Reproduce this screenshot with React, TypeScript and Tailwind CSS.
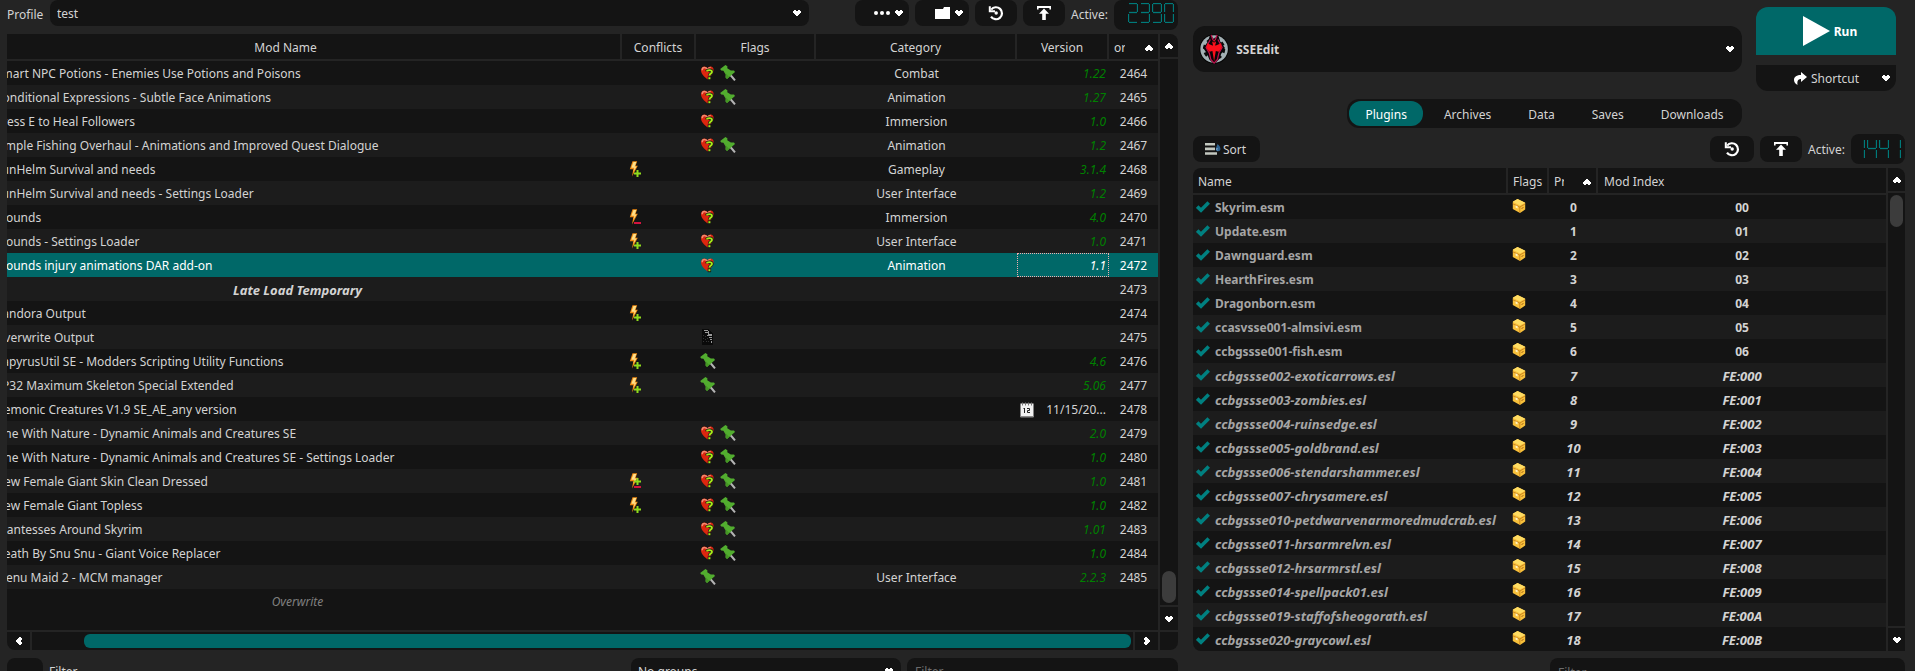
import { useState, type ReactNode } from 'react';
import { clsx } from 'clsx';

type Conflict = 'plus' | 'minus' | 'mixed';
type Flag = 'heart' | 'pin' | 'file';

interface Mod {
  name: string;
  priority: number;
  conflict?: Conflict;
  flags?: Flag[];
  category?: string;
  version?: string;
  separator?: boolean;
  dated?: boolean;
}

const MODS: Mod[] = [
  { name: 'Smart NPC Potions - Enemies Use Potions and Poisons', priority: 2464, flags: ['heart', 'pin'], category: 'Combat', version: '1.22' },
  { name: 'Conditional Expressions - Subtle Face Animations', priority: 2465, flags: ['heart', 'pin'], category: 'Animation', version: '1.27' },
  { name: 'Press E to Heal Followers', priority: 2466, flags: ['heart'], category: 'Immersion', version: '1.0' },
  { name: 'Simple Fishing Overhaul - Animations and Improved Quest Dialogue', priority: 2467, flags: ['heart', 'pin'], category: 'Animation', version: '1.2' },
  { name: 'SunHelm Survival and needs', priority: 2468, conflict: 'plus', category: 'Gameplay', version: '3.1.4' },
  { name: 'SunHelm Survival and needs - Settings Loader', priority: 2469, category: 'User Interface', version: '1.2' },
  { name: 'Wounds', priority: 2470, conflict: 'minus', flags: ['heart'], category: 'Immersion', version: '4.0' },
  { name: 'Wounds - Settings Loader', priority: 2471, conflict: 'plus', flags: ['heart'], category: 'User Interface', version: '1.0' },
  { name: 'Wounds injury animations DAR add-on', priority: 2472, flags: ['heart'], category: 'Animation', version: '1.1' },
  { name: 'Late Load Temporary', priority: 2473, separator: true },
  { name: 'Pandora Output', priority: 2474, conflict: 'plus' },
  { name: 'Overwrite Output', priority: 2475, flags: ['file'] },
  { name: 'PapyrusUtil SE - Modders Scripting Utility Functions', priority: 2476, conflict: 'plus', flags: ['pin'], version: '4.6' },
  { name: 'XP32 Maximum Skeleton Special Extended', priority: 2477, conflict: 'plus', flags: ['pin'], version: '5.06' },
  { name: 'Demonic Creatures V1.9 SE_AE_any version', priority: 2478, version: '11/15/20...', dated: true },
  { name: 'One With Nature - Dynamic Animals and Creatures SE', priority: 2479, flags: ['heart', 'pin'], version: '2.0' },
  { name: 'One With Nature - Dynamic Animals and Creatures SE - Settings Loader', priority: 2480, flags: ['heart', 'pin'], version: '1.0' },
  { name: 'New Female Giant Skin Clean Dressed', priority: 2481, conflict: 'mixed', flags: ['heart', 'pin'], version: '1.0' },
  { name: 'New Female Giant Topless', priority: 2482, conflict: 'plus', flags: ['heart', 'pin'], version: '1.0' },
  { name: 'Giantesses Around Skyrim', priority: 2483, flags: ['heart', 'pin'], version: '1.01' },
  { name: 'Death By Snu Snu - Giant Voice Replacer', priority: 2484, flags: ['heart', 'pin'], version: '1.0' },
  { name: 'Menu Maid 2 - MCM manager', priority: 2485, flags: ['pin'], category: 'User Interface', version: '2.2.3' },
];

const PLUGINS: { name: string; index: string; box: boolean }[] = [
  { name: 'Skyrim.esm', index: '00', box: true },
  { name: 'Update.esm', index: '01', box: false },
  { name: 'Dawnguard.esm', index: '02', box: true },
  { name: 'HearthFires.esm', index: '03', box: false },
  { name: 'Dragonborn.esm', index: '04', box: true },
  { name: 'ccasvsse001-almsivi.esm', index: '05', box: true },
  { name: 'ccbgssse001-fish.esm', index: '06', box: true },
  { name: 'ccbgssse002-exoticarrows.esl', index: 'FE:000', box: true },
  { name: 'ccbgssse003-zombies.esl', index: 'FE:001', box: true },
  { name: 'ccbgssse004-ruinsedge.esl', index: 'FE:002', box: true },
  { name: 'ccbgssse005-goldbrand.esl', index: 'FE:003', box: true },
  { name: 'ccbgssse006-stendarshammer.esl', index: 'FE:004', box: true },
  { name: 'ccbgssse007-chrysamere.esl', index: 'FE:005', box: true },
  { name: 'ccbgssse010-petdwarvenarmoredmudcrab.esl', index: 'FE:006', box: true },
  { name: 'ccbgssse011-hrsarmrelvn.esl', index: 'FE:007', box: true },
  { name: 'ccbgssse012-hrsarmrstl.esl', index: 'FE:008', box: true },
  { name: 'ccbgssse014-spellpack01.esl', index: 'FE:009', box: true },
  { name: 'ccbgssse019-staffofsheogorath.esl', index: 'FE:00A', box: true },
  { name: 'ccbgssse020-graycowl.esl', index: 'FE:00B', box: true },
];

const TABS = ['Plugins', 'Archives', 'Data', 'Saves', 'Downloads'];

/* ---------- icons ---------- */

function Arrow({ className }: { className?: string }) {
  return (
    <svg viewBox="0 0 8 6" shapeRendering="crispEdges" className={clsx('h-1.5 w-2 shrink-0 fill-white', className)}>
      <path d="M1 0h2v1h2V0h2v1h1v2H7v1H6v1H5v1H3V5H2V4H1V3H0V1h1z" />
    </svg>
  );
}

function RestoreIcon() {
  return (
    <svg viewBox="0 0 16 16" className="size-4" fill="none" stroke="#fff" strokeWidth="2.2">
      <path d="M3.2 4.6A6 6 0 1 1 3 11.6" />
      <path d="M1.8 1.2v5h5.2" strokeWidth="2" />
      <circle cx="8.2" cy="8" r="1.7" fill="#fff" stroke="none" />
    </svg>
  );
}

function ExportIcon() {
  return (
    <svg viewBox="0 0 16 16" className="size-4 fill-white">
      <path d="M1 1h14v3.4h-1.6V3H2.600v1.400H1z" />
      <path d="M8 3.600l5 5.200h-3.200V15H6.200V8.800H3z" />
    </svg>
  );
}

function HeartIcon() {
  return (
    <svg viewBox="0 0 16 16" className="size-4">
      <path d="M7.500 14.500C4 11.500 1 8.800 1 5.300 1 2.800 2.600 1.400 4.400 1.400c1.300 0 2.500.7 3.100 1.800.6-1.100 1.700-1.800 3-1.800 2 0 3.100 1.500 3.100 3.500 0 3.500-2.600 6.100-6.100 9.600z" fill="#dc260f" />
      <path d="M2.200 5.200c0-1.700 1-2.700 2.300-2.700 1.400 0 2.400 1 3 2.200.6-1.300 1.600-2.200 3.200-2.200" fill="none" stroke="#f08c70" strokeWidth="1.500" />
      <path d="M6.800 6.400c.2-1.700 5.200-2.100 5.200.5-.1 1.600-2.500 1.700-2.600 3.700" fill="none" stroke="#151515" strokeWidth="3.200" />
      <path d="M7.700 11.400h3.400v3.800H7.700z" fill="#151515" />
      <path d="M6.800 6.400c.2-1.700 5.200-2.100 5.200.5-.1 1.600-2.500 1.700-2.600 3.700" fill="none" stroke="#a6ea18" strokeWidth="1.800" />
      <path d="M8.400 12.200h2v2h-2z" fill="#a6ea18" />
    </svg>
  );
}

function PinIcon() {
  return (
    <svg viewBox="0 0 16 16" className="size-4">
      <path d="M10 9.500l5 5.900" stroke="#b4b4b4" strokeWidth="2" />
      <path d="M.2 4L5.400 0l2 1.200-.1 2.100 3.500 2.200 3.200.1 1 1.500L7 14l-1.600-1.400.2-3L3.400 5.800 1.200 5.600z" fill="#52ad2f" />
      <path d="M4.300 6.500l1.900 3-.2 2.900L7 14l2.200-2z" fill="#449624" />
    </svg>
  );
}

function FileIcon() {
  return (
    <svg viewBox="0 0 16 16" className="size-4" shapeRendering="crispEdges">
      <path d="M2 0h7l4 5v11H2z" fill="#0a0a0a" />
      <path d="M4 1h4v1H4zM5 3h4v1H5zM8 2h1v3h3v1H8zM7 6h5v1H7zM9 8h3v1H9zM10 10h2v1h-2zM11 12h1v2h-1z" fill="#9a9a9a" />
      <path d="M3 6h1v1H3zM5 7h1v1H5zM3 9h1v1H3zM5 10h1v1H5zM7 9h1v1H7zM3 12h1v1H3zM6 12h1v1H6zM8 12h1v1H8z" fill="#333" />
    </svg>
  );
}

const FLAG_ICONS: Record<Flag, () => ReactNode> = { heart: HeartIcon, pin: PinIcon, file: FileIcon };

function ConflictIcon({ kind }: { kind: Conflict }) {
  return (
    <svg viewBox="0 0 16 16" className="size-4">
      <path d="M4.500.3h4.700L7.600 4.800h2.200L4 15.500l1.300-7.200H1.800z" fill="#f08a12" />
      <path d="M5.500 1h2.800L6.600 5.500h1.900L5.300 11l1.100-4.300H3.300z" fill="#ffe08a" />
      {kind === 'plus' && <path d="M8.500 9v2.500H6v2h2.500V16h2v-2.500H13v-2h-2.500V9z" fill="#8fdc1c" />}
      {kind === 'mixed' && <path d="M8.500 5v2.500H6v2h2.500V12h2V9.500H13v-2h-2.500V5z" fill="#8fdc1c" />}
      {kind !== 'plus' && <path d="M6 13h7v2H6z" fill="#d3143f" />}
    </svg>
  );
}

function CalendarIcon() {
  return (
    <svg viewBox="0 0 16 16" className="size-4">
      <path d="M1.500 1.500h13v13.500h-13z" fill="#f2f2f2" />
      <path d="M1.500 14h13v1.500h-13z" fill="#8c8c8c" />
      <path d="M3.500.5v3M6.500.5v3M9.500.5v3M12.500.5v3" stroke="#777" />
      <path d="M5.500 6v5M4.500 6.500h1M8 6.500h2.500v2H8.500v2H11" fill="none" stroke="#222" />
    </svg>
  );
}

function BoxIcon() {
  return (
    <svg viewBox="0 0 14 14" className="size-3.5">
      <path d="M.800 2.800L5.500 0 13.200 3.800v6.700L8 14 .800 10z" fill="#f8c03a" />
      <path d="M.800 2.800L5.500 0l7.700 3.800L8 6.500z" fill="#ffdc62" />
      <path d="M.8 4.800L7.800 8v5.600M7.800 8l5.300-3" fill="none" stroke="#c27a1c" strokeWidth=".8" />
      <path d="M3.600 6.300l2 1v2.200l-2-1z" fill="#fff3c4" />
      <path d="M9.500 9.500l2-1" stroke="#a8641a" />
    </svg>
  );
}

function CheckIcon() {
  return (
    <svg viewBox="0 0 14 12" className="pointer-events-none h-3 w-3.5" fill="none" stroke="#008080" strokeWidth="3.600">
      <path d="M1.200 5.600l3.800 3.700L12.700 1.500" />
    </svg>
  );
}

function SortIcon() {
  return (
    <svg viewBox="0 0 16 14" className="h-3.5 w-4">
      <path d="M0 1h10v2.600H0zM0 5.600h10v2.600H0zM0 10.200h12v2.600H0z" fill="#c3c8c0" />
      <path d="M12.500 2c3 2.500 3.500 5 2.500 6.500-1 1.200-3.200 1-4-.3-.8-1.700.6-3 1.500-6.200z" fill="#2f6391" />
      <path d="M12.300 6c-.7 1-.6 1.700 0 2.300" fill="none" stroke="#9cc4e4" />
    </svg>
  );
}

function SkyrimLogo() {
  return (
    <svg viewBox="0 0 32 32" className="size-8">
      <circle cx="16" cy="16" r="15.600" fill="#050505" />
      <circle cx="16" cy="16" r="14.600" fill="#a3b0b4" />
      <circle cx="16" cy="16" r="9" fill="#0b0b0b" />
      <circle cx="16" cy="16" r="10" fill="none" stroke="#0b0b0b" strokeWidth="3.600" strokeDasharray="3.900 3.954" />
      <path d="M12 0l3 5h2l3-5 2.500 8 5 7-4 6-2.500 6L16 32l-5-5-2.500-6-4-6 5-7z" fill="#0a0608" />
      <path d="M12.800 1l2.400 6.500M19.200 1l-2.400 6.500M12 6l-4.500 8.500 3.500 6 1.500 6.500 3.500 4 3.500-4 1.500-6.500 3.500-6L20 6" fill="none" stroke="#c0104c" strokeWidth="1.300" />
      <path d="M16 6l2 3-.8 3.500 6.300-2.500.5 5-3 4-3.200-1L17 23l-1 6-1-6-.8-5-3.200 1-3-4 .5-5 6.300 2.500L14 9z" fill="#fb0f1b" />
      <path d="M14 6.500l2 2.500 2-2.500M13 10l1.500 1M19 10l-1.500 1" stroke="#20060a" fill="none" />
    </svg>
  );
}

/* ---------- lcd counter ---------- */

// top, top-left, top-right, middle, bottom-left, bottom-right, bottom
const SEGMENTS = ['M1 .5h8', 'M.5 1v8', 'M9.500 1v8', 'M1 9.500h8', 'M.5 11v8', 'M9.500 11v8', 'M1 19.500h8'];
const DIGITS: Record<string, number[]> = {
  '0': [0, 1, 2, 4, 5, 6],
  '1': [2, 5],
  '2': [0, 2, 3, 4, 6],
  '3': [0, 2, 3, 5, 6],
  '4': [1, 2, 3, 5],
  '9': [0, 1, 2, 3, 5, 6],
};

function Lcd({ value, className }: { value: string; className?: string }) {
  return (
    <div role="img" aria-label={value} className={clsx('flex h-[30px] shrink-0 items-center justify-end gap-0.5 rounded-lg bg-[#141414]', className)}>
      {value.split('').map((digit, i) => (
        <svg key={i} viewBox="0 0 10 20" className="h-5 w-2.5" fill="none" stroke="#007a7a" strokeWidth="1.300">
          {DIGITS[digit].map((s) => <path key={s} d={SEGMENTS[s]} />)}
        </svg>
      ))}
    </div>
  );
}

/* ---------- shared controls ---------- */

function Combo({ id, label, value, className, children }: { id: string; label: string; value: string; className?: string; children?: ReactNode }) {
  return (
    <div className={clsx('relative flex items-center bg-[#141414]', className)}>
      {children}
      <select id={id} aria-label={label} className="h-full w-full appearance-none bg-transparent pt-0.5 pl-[7px] outline-none">
        <option>{value}</option>
      </select>
      <Arrow className="pointer-events-none absolute right-2" />
    </div>
  );
}

function ToolButton({ label, className, children }: { label: string; className?: string; children: ReactNode }) {
  return (
    <button aria-label={label} title={label} className={clsx('flex h-[26px] shrink-0 items-center rounded-lg bg-[#141414]', className)}>
      {children}
    </button>
  );
}

function VScroll({ position, className }: { position: 'top' | 'bottom'; className: string }) {
  return (
    <div className={clsx('flex shrink-0 flex-col gap-0.5', className)}>
      <button aria-label="Scroll up" className="flex h-[23px] items-center justify-center rounded-tr-lg bg-[#141414]">
        <Arrow className="rotate-180" />
      </button>
      <div className={clsx('flex flex-1 flex-col bg-[#141414] p-0.5', position === 'bottom' && 'justify-end')}>
        <div className="h-8 rounded-full bg-[#3c3c3c]" />
      </div>
      <button aria-label="Scroll down" className="flex h-[23px] items-center justify-center bg-[#141414]">
        <Arrow />
      </button>
    </div>
  );
}

const TH = 'h-[27px] border-b-2 border-[#242424] p-0 pt-0.5 font-normal';
const TD = 'p-0 pt-0.5';

/* ---------- mod list ---------- */

function ModTable() {
  const [selected, setSelected] = useState(2472);

  return (
    <div className="min-w-0 flex-1 overflow-hidden bg-[#141414] pb-[17px]">
      {/* list is scrolled a little to the right */}
      <div className="-ml-14">
        <table className="w-full table-fixed border-separate border-spacing-0">
          <colgroup>
            <col />
            <col className="w-[74px]" />
            <col className="w-[120px]" />
            <col className="w-[201px]" />
            <col className="w-[92px]" />
            <col className="w-[49px]" />
          </colgroup>
          <thead>
            <tr>
              {['Mod Name', 'Conflicts', 'Flags', 'Category', 'Version'].map((h) => (
                <th key={h} className={clsx(TH, 'border-r-2 text-center')}>{h}</th>
              ))}
              <th className={TH}>
                <div className="flex items-center justify-between px-[5px]">
                  <span className="w-[11px] overflow-hidden">or</span>
                  <Arrow className="rotate-180" />
                </div>
              </th>
            </tr>
          </thead>
          <tbody>
            {MODS.map((mod) => {
              const active = mod.priority === selected;
              return (
                <tr
                  key={mod.priority}
                  onClick={() => setSelected(mod.priority)}
                  className={clsx('h-6', active ? 'bg-[#006868] text-white' : 'even:bg-[#1c1c1c]')}
                >
                  <td className={clsx(TD, 'overflow-hidden whitespace-nowrap', mod.separator ? 'pl-[22px] text-center text-[13px] leading-4 font-bold italic' : 'pl-11')}>
                    {mod.name}
                  </td>
                  <td className="p-0 pl-1.5">{mod.conflict && <ConflictIcon kind={mod.conflict} />}</td>
                  <td className="p-0 pl-1">
                    <div className="flex gap-1">
                      {mod.flags?.map((flag) => {
                        const Icon = FLAG_ICONS[flag];
                        return <Icon key={flag} />;
                      })}
                    </div>
                  </td>
                  <td className={clsx(TD, 'text-center')}>{mod.category}</td>
                  <td
                    className={clsx(
                      TD,
                      'pr-[3px] text-right',
                      active && 'outline-1 -outline-offset-1 outline-dotted outline-[#f0b0b0] italic',
                      !active && !mod.dated && 'text-[#008000] italic',
                    )}
                  >
                    {mod.dated ? (
                      <div className="flex items-start justify-between pl-0.5">
                        <CalendarIcon />
                        {mod.version}
                      </div>
                    ) : mod.version}
                  </td>
                  <td className={clsx(TD, 'text-center')}>{mod.priority}</td>
                </tr>
              );
            })}
            <tr className="h-6">
              <td className={clsx(TD, 'pl-[22px] text-center text-[#808080] italic')}>Overwrite</td>
              <td colSpan={5} />
            </tr>
          </tbody>
        </table>
      </div>
    </div>
  );
}

function ModPanel() {
  return (
    <section className="flex min-w-0 flex-col">
      <div className="flex h-[34px] items-start">
        <label htmlFor="profile" className="w-[43px] shrink-0 leading-[30px]">Profile</label>
        <Combo id="profile" label="Profile" value="test" className="mr-[46px] h-[26px] flex-1 rounded-lg" />
        <div className="flex gap-1.5">
          <ToolButton label="List options" className="w-[54px] justify-end gap-[5px] pr-1.5">
            <svg viewBox="0 0 16 4" className="h-1 w-4 fill-white">
              <circle cx="2" cy="2" r="2" />
              <circle cx="8" cy="2" r="2" />
              <circle cx="14" cy="2" r="2" />
            </svg>
            <Arrow />
          </ToolButton>
          <ToolButton label="Open folder" className="w-[54px] justify-end gap-[5px] pr-1.5">
            <svg viewBox="0 0 15 12" className="h-3 w-[15px] fill-white">
              <path d="M0 2h8l1-2h6v12H0z" />
            </svg>
            <Arrow />
          </ToolButton>
          <ToolButton label="Restore backup" className="w-[42px] justify-center"><RestoreIcon /></ToolButton>
          <ToolButton label="Create backup" className="w-[42px] justify-center"><ExportIcon /></ToolButton>
          <span className="w-[37px] leading-[30px]">Active:</span>
          <Lcd value="2390" className="w-16 pr-1 pb-1" />
        </div>
      </div>

      <div className="flex gap-0.5">
        <ModTable />
        <VScroll position="bottom" className="w-[18px]" />
      </div>

      <div className="mt-0.5 flex h-[18px] gap-0.5">
        <button aria-label="Scroll left" className="flex w-[23px] items-center justify-center rounded-bl-lg bg-[#141414]">
          <Arrow className="rotate-90" />
        </button>
        <div className="flex-1 bg-[#141414] py-0.5 pr-0.5 pl-[52px]">
          <div className="h-full rounded-md bg-[#006868]" />
        </div>
        <button aria-label="Scroll right" className="flex w-[23px] items-center justify-center bg-[#141414]">
          <Arrow className="-rotate-90" />
        </button>
        <div className="w-[18px] rounded-br-lg bg-[#141414]" />
      </div>

      <div className="mt-2 flex h-[26px] gap-1.5">
        <button aria-label="Toggle filters" className="w-9 rounded-lg bg-[#141414]" />
        <span className="flex-1 leading-[28px]">Filter</span>
        <Combo id="groups" label="Groups" value="No groups" className="w-[270px] rounded-lg" />
        <input aria-label="Filter mods" placeholder="Filter" className="w-[271px] rounded-lg bg-[#141414] px-2 pt-0.5 outline-none placeholder:text-[#6c6c6c]" />
      </div>
    </section>
  );
}

/* ---------- plugin list ---------- */

function PluginTable() {
  return (
    <div className="min-w-0 flex-1 overflow-hidden rounded-tl-lg rounded-bl-lg bg-[#141414]">
      <table className="w-full table-fixed border-separate border-spacing-0 font-bold">
        <colgroup>
          <col />
          <col className="w-[41px]" />
          <col className="w-[49px]" />
          <col className="w-[288px]" />
        </colgroup>
        <thead>
          <tr className="text-left">
            <th className={clsx(TH, 'border-r-2 pl-[5px]')}>Name</th>
            <th className={clsx(TH, 'border-r-2 pl-[5px]')}>Flags</th>
            <th className={clsx(TH, 'border-r-2')}>
              <div className="flex items-center justify-between px-[5px]">
                <span className="w-[10px] overflow-hidden">Pr</span>
                <Arrow className="rotate-180" />
              </div>
            </th>
            <th className={clsx(TH, 'pl-1.5')}>Mod Index</th>
          </tr>
        </thead>
        <tbody>
          {PLUGINS.map((plugin, i) => {
            const light = plugin.name.endsWith('.esl');
            return (
              <tr key={plugin.name} className={clsx('h-6 even:bg-[#1c1c1c]', light && 'text-[13px] leading-4 italic')}>
                <td className="p-0 pl-[3px]">
                  <label className="flex items-center gap-[5px] text-[#a5a5a5]">
                    <span className="grid place-items-center *:col-start-1 *:row-start-1">
                      <input type="checkbox" defaultChecked className="peer size-3.5 appearance-none" />
                      <span className="hidden peer-checked:block"><CheckIcon /></span>
                    </span>
                    <span className="pt-0.5">{plugin.name}</span>
                  </label>
                </td>
                <td className="p-0 pb-0.5 pl-1">{plugin.box && <BoxIcon />}</td>
                <td className={clsx(TD, 'text-center')}>{i}</td>
                <td className={clsx(TD, 'text-center')}>{plugin.index}</td>
              </tr>
            );
          })}
        </tbody>
      </table>
    </div>
  );
}

function PluginPanel() {
  const [tab, setTab] = useState('Plugins');

  return (
    <section className="flex min-w-0 flex-col">
      <div className="flex items-start gap-3.5 pt-[7px] pr-[9px]">
        <Combo id="executable" label="Executable" value="SSEEdit" className="mt-[19px] h-[46px] flex-1 rounded-xl pl-1.5 font-bold">
          <SkyrimLogo />
        </Combo>
        <div className="flex w-[140px] flex-col gap-2.5">
          <button className="flex h-12 items-center justify-center gap-1 rounded-t-xl bg-[#006868] pl-2 font-bold text-white">
            <svg viewBox="0 0 27 30" className="h-[30px] w-[27px] fill-white">
              <path d="M0 0l27 15L0 30z" />
            </svg>
            <span className="pt-0.5">Run</span>
          </button>
          <button className="flex h-[26px] items-center rounded-b-xl bg-[#141414] pr-1.5 pl-[38px]">
            <svg viewBox="0 0 13 13" className="mr-1 size-[13px] fill-white">
              <path d="M7 0l6 5-6 5V7C4 7 3 9 3.500 13 1.500 12 0 10 0 8c0-3.500 3-5 7-5z" />
            </svg>
            <span className="pt-0.5">Shortcut</span>
            <Arrow className="ml-auto" />
          </button>
        </div>
      </div>

      <div role="tablist" className="mt-2 mr-[9px] flex h-[29px] gap-[5px] self-center rounded-xl bg-[#141414] p-0.5">
        {TABS.map((t) => (
          <button
            key={t}
            role="tab"
            aria-selected={tab === t}
            onClick={() => setTab(t)}
            className={clsx('rounded-xl px-4 pt-0.5', tab === t && 'bg-[#006868] text-white')}
          >
            {t}
          </button>
        ))}
      </div>

      <div className="mt-1.5 flex items-center gap-1.5">
        <ToolButton label="Sort" className="mr-auto gap-0.5 pr-3.5 pl-3">
          <SortIcon />
          <span className="pt-0.5">Sort</span>
        </ToolButton>
        <ToolButton label="Restore backup" className="w-11 justify-center"><RestoreIcon /></ToolButton>
        <ToolButton label="Create backup" className="w-[42px] justify-center"><ExportIcon /></ToolButton>
        <span className="w-[37px] pt-0.5">Active:</span>
        <Lcd value="1441" className="w-[54px] pr-1" />
      </div>

      <div className="mt-1 flex gap-0.5">
        <PluginTable />
        <VScroll position="top" className="w-[17px]" />
      </div>

      <input
        aria-label="Filter plugins"
        placeholder="Filter"
        className="mt-[7px] h-[26px] w-[355px] self-end rounded-lg bg-[#141414] px-2 pt-0.5 outline-none placeholder:text-[#6c6c6c]"
      />
    </section>
  );
}

export default function App() {
  return (
    <main className="h-screen overflow-hidden bg-[#242424] font-['Noto_Sans','Open_Sans',sans-serif] text-[12px] leading-4 text-[#d3d3d3]">
      <div className="grid grid-cols-[1171fr_712fr] gap-[15px] pr-2.5 pl-[7px]">
        <ModPanel />
        <PluginPanel />
      </div>
    </main>
  );
}
